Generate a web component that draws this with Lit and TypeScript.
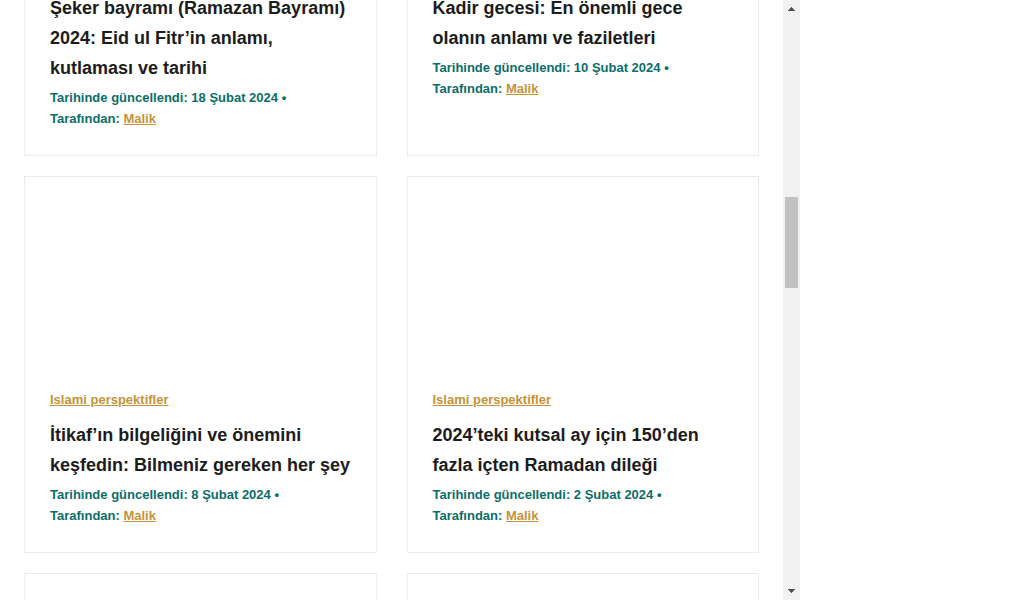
import { LitElement, html, css, nothing } from "lit";
import { customElement, property } from "lit/decorators.js";

interface Article {
  category?: string;
  title: string;
  date: string;
  author: string;
}

const continued: Article[] = [
  {
    title: "Şeker bayramı (Ramazan Bayramı) 2024: Eid ul Fitr’in anlamı, kutlaması ve tarihi",
    date: "18 Şubat 2024",
    author: "Malik",
  },
  {
    title: "Kadir gecesi: En önemli gece olanın anlamı ve faziletleri",
    date: "10 Şubat 2024",
    author: "Malik",
  },
];

const articles: Article[] = [
  {
    category: "Islami perspektifler",
    title: "İtikaf’ın bilgeliğini ve önemini keşfedin: Bilmeniz gereken her şey",
    date: "8 Şubat 2024",
    author: "Malik",
  },
  {
    category: "Islami perspektifler",
    title: "2024’teki kutsal ay için 150’den fazla içten Ramadan dileği",
    date: "2 Şubat 2024",
    author: "Malik",
  },
];

@customElement("article-card")
export class ArticleCard extends LitElement {
  @property({ attribute: false }) article?: Article;

  static styles = css`
    :host {
      display: block;
      box-sizing: border-box;
      border: 1px solid #ebebeb;
      padding: 0 25px 26px;
      background: #fff;
    }
    .media {
      height: 212px;
    }
    .category,
    .meta {
      margin: 0;
      font-size: 13px;
      line-height: 21px;
      font-weight: 700;
      color: #0b6e69;
    }
    .category {
      margin-bottom: 10px;
    }
    .title {
      margin: 0 0 4px;
      font-size: 18px;
      line-height: 30px;
      font-weight: 700;
      color: #1c1c1c;
    }
    .author {
      white-space: nowrap;
    }
    a {
      color: #c4933a;
      text-decoration: underline;
    }
  `;

  render() {
    const a = this.article;
    const top = !a || a.category ? html`<div class="media"></div>` : nothing;
    if (!a) return top;
    return html`
      ${top}
      ${a.category
        ? html`<p class="category"><a href="#">${a.category}</a></p>`
        : nothing}
      <h2 class="title">${a.title}</h2>
      <p class="meta">
        Tarihinde güncellendi: ${a.date} •
        <span class="author">Tarafından: <a href="#">${a.author}</a></span>
      </p>
    `;
  }
}

@customElement("scroll-rail")
export class ScrollRail extends LitElement {
  static styles = css`
    :host {
      display: flex;
      flex-direction: column;
      flex: none;
      width: 17px;
      background: #f1f1f1;
    }
    .step {
      display: flex;
      flex: none;
      height: 17px;
      padding: 0;
      border: 0;
      background: none;
    }
    .icon {
      display: block;
      width: 17px;
      height: 17px;
      fill: #505050;
    }
    .before {
      flex: 180 0 0;
    }
    .thumb {
      flex: 91 0 0;
      margin: 0 2px;
      background: #c1c1c1;
    }
    .after {
      flex: 295 0 0;
    }
  `;

  render() {
    return html`
      <button class="step" aria-label="Yukarı">
        <svg class="icon" viewBox="0 0 17 17" shape-rendering="crispEdges">
          <path d="M8 7h1v1h1v1h1v1h1v1H5v-1h1V9h1V8h1z" />
        </svg>
      </button>
      <div class="before"></div>
      <div class="thumb"></div>
      <div class="after"></div>
      <button class="step" aria-label="Aşağı">
        <svg class="icon" viewBox="0 0 17 17" shape-rendering="crispEdges">
          <path d="M5 6h7v1h-1v1h-1v1H9v1H8V9H7V8H6V7H5z" />
        </svg>
      </button>
    `;
  }
}

@customElement("app-root")
export class AppRoot extends LitElement {
  static styles = css`
    :host {
      display: block;
      background: #fff;
      font-family: "Liberation Sans", Arial, sans-serif;
    }
    .frame {
      display: flex;
      height: 100vh;
      max-width: 800px;
      overflow: hidden;
    }
    .content {
      flex: 1;
      min-width: 0;
      overflow: hidden;
      padding: 0 24px;
    }
    /* The first row is already partly scrolled past the top edge. */
    .grid {
      display: grid;
      grid-template-columns: repeat(2, minmax(0, 1fr));
      gap: 20px 30px;
      margin-top: -8px;
    }
  `;

  render() {
    return html`
      <div class="frame">
        <main class="content">
          <div class="grid">
            ${[...continued, ...articles, undefined, undefined].map(
              (a) => html`<article-card .article=${a}></article-card>`
            )}
          </div>
        </main>
        <scroll-rail></scroll-rail>
      </div>
    `;
  }
}
